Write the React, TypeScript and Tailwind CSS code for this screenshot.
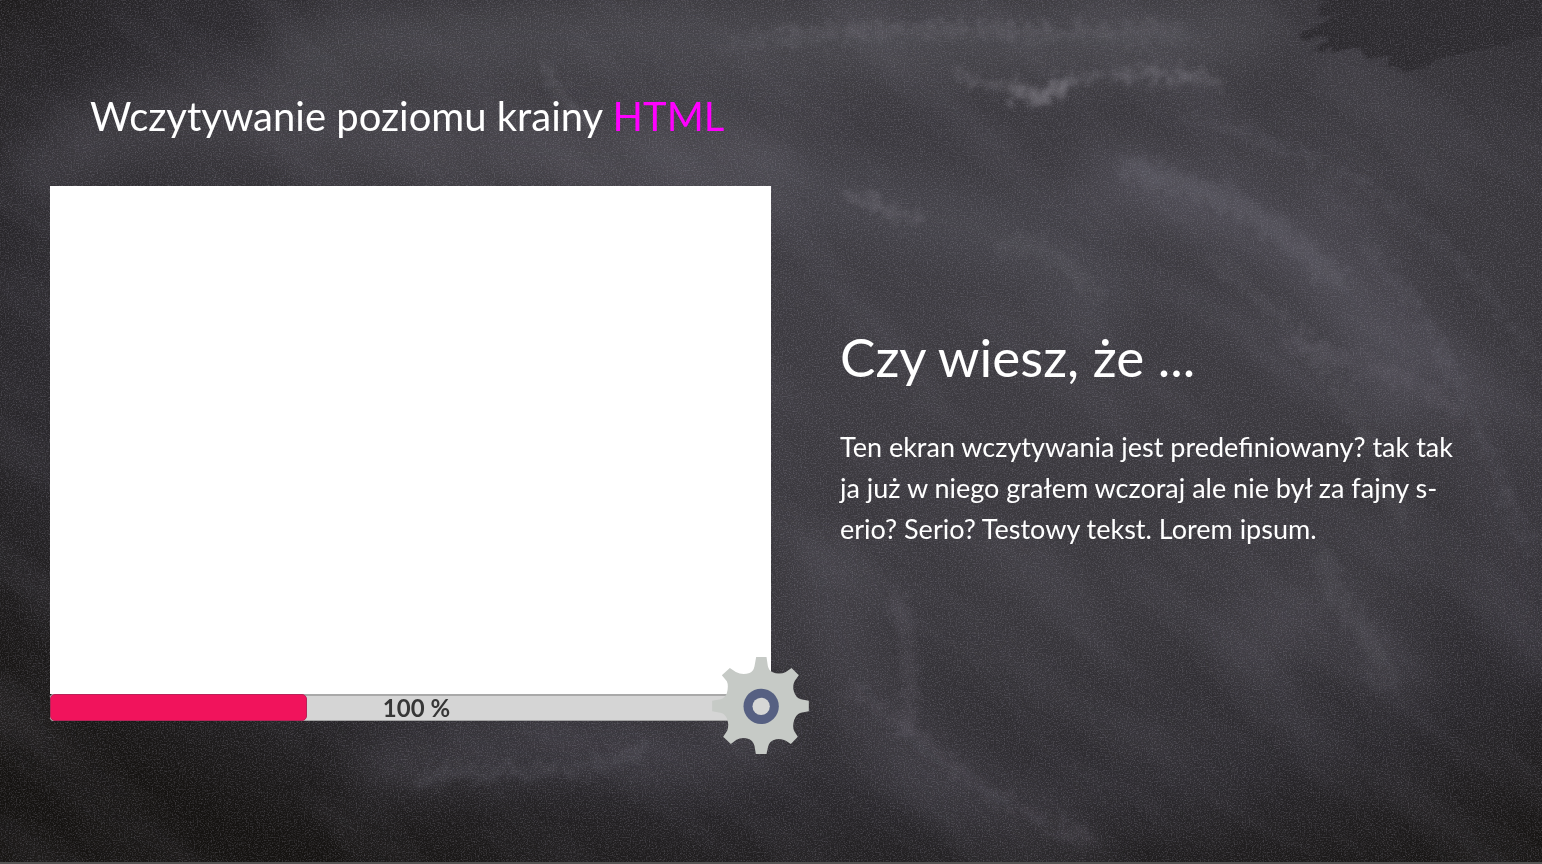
import React from "react";

const LOADED_SHARE = 35.6;

type Smear = { d: string; width: number; color: string; opacity: number };

const softSmears: Smear[] = [
  { d: "M300 55 C600 10 850 70 1250 30", width: 60, color: "#65636b", opacity: 0.35 },
  { d: "M1110 185 C1250 190 1340 260 1400 400", width: 60, color: "#66646f", opacity: 0.42 },
  { d: "M1330 200 C1440 330 1500 460 1530 640", width: 50, color: "#5a5862", opacity: 0.25 },
  { d: "M790 180 C900 230 1000 200 1100 300", width: 60, color: "#5d5b64", opacity: 0.35 },
  { d: "M820 560 C840 700 900 760 1080 840", width: 50, color: "#5d5b64", opacity: 0.3 },
  { d: "M380 770 C480 730 620 760 760 740", width: 50, color: "#5b5963", opacity: 0.35 },
  { d: "M1260 640 C1320 560 1330 600 1400 680", width: 60, color: "#5d5b64", opacity: 0.3 },
  { d: "M60 160 C200 60 400 170 760 160", width: 70, color: "#5a585f", opacity: 0.4 },
];

const fineSmears: Smear[] = [
  { d: "M720 50 C850 10 1000 40 1180 28", width: 6, color: "#8c8a92", opacity: 0.28 },
  { d: "M780 45 C900 28 1050 45 1200 38", width: 4, color: "#8c8a92", opacity: 0.2 },
  { d: "M955 75 C1010 85 1035 105 1060 88 C1100 70 1160 72 1220 82", width: 8, color: "#9b99a1", opacity: 0.32 },
  { d: "M1020 92 C1035 104 1045 104 1062 84", width: 12, color: "#9b99a1", opacity: 0.35 },
  { d: "M850 195 C880 195 885 225 915 218", width: 10, color: "#96949d", opacity: 0.26 },
  { d: "M1130 170 C1230 190 1280 230 1335 280", width: 24, color: "#85838e", opacity: 0.16 },
  { d: "M1290 340 C1350 370 1420 370 1455 415", width: 14, color: "#85838e", opacity: 0.14 },
  { d: "M1360 240 C1450 330 1490 460 1530 550", width: 8, color: "#85838e", opacity: 0.16 },
  { d: "M1180 120 C1350 150 1450 230 1535 360", width: 8, color: "#77757f", opacity: 0.18 },
  { d: "M1210 260 C1300 320 1360 400 1400 520", width: 12, color: "#77757f", opacity: 0.14 },
  { d: "M1000 250 C1030 230 1060 260 1100 300", width: 14, color: "#85838e", opacity: 0.12 },
  { d: "M545 70 C560 90 562 110 590 120", width: 12, color: "#85838e", opacity: 0.22 },
  { d: "M900 600 C900 640 920 680 905 730", width: 14, color: "#85838e", opacity: 0.14 },
  { d: "M1325 560 C1330 620 1370 610 1385 680", width: 22, color: "#85838e", opacity: 0.12 },
  { d: "M850 690 C930 740 970 800 1090 840", width: 12, color: "#85838e", opacity: 0.14 },
  { d: "M420 780 C500 760 560 790 640 750", width: 12, color: "#85838e", opacity: 0.16 },
];

function Chalkboard() {
  return (
    <svg
      className="pointer-events-none absolute inset-0 h-full w-full"
      viewBox="0 0 1542 864"
      preserveAspectRatio="xMidYMid slice"
      colorInterpolationFilters="sRGB"
      aria-hidden="true"
    >
      <defs>
        <radialGradient id="board" cx="0.6" cy="0.34" r="0.76">
          <stop offset="0" stopColor="#3e3c42" />
          <stop offset="0.5" stopColor="#39373c" />
          <stop offset="0.78" stopColor="#2a282c" />
          <stop offset="1" stopColor="#151311" />
        </radialGradient>
        <filter id="soft" x="-20%" y="-50%" width="140%" height="200%">
          <feGaussianBlur stdDeviation="24" />
        </filter>
        <filter id="rough" x="-20%" y="-50%" width="140%" height="200%">
          <feTurbulence type="fractalNoise" baseFrequency="0.12" numOctaves="4" seed="4" result="n" />
          <feDisplacementMap in="SourceGraphic" in2="n" scale="44" xChannelSelector="R" yChannelSelector="G" />
          <feGaussianBlur stdDeviation="2.5" />
        </filter>
        <filter id="wiped" x="-10%" y="-10%" width="120%" height="120%">
          <feTurbulence type="fractalNoise" baseFrequency="0.03 0.1" numOctaves="3" seed="8" result="n" />
          <feDisplacementMap in="SourceGraphic" in2="n" scale="14" xChannelSelector="R" yChannelSelector="G" />
          <feGaussianBlur stdDeviation="1" />
        </filter>
        <filter id="dust" x="0" y="0" width="100%" height="100%">
          <feTurbulence type="fractalNoise" baseFrequency="0.73" numOctaves="4" seed="11" />
          <feColorMatrix values="0 0 0 0 0.62  0 0 0 0 0.61  0 0 0 0 0.66  2.4 0 0 0 -1.05" />
          <feGaussianBlur stdDeviation="0.6" />
        </filter>
        <filter id="clouds" x="0" y="0" width="100%" height="100%">
          <feTurbulence type="fractalNoise" baseFrequency="0.004 0.014" numOctaves="6" seed="21" />
          <feColorMatrix values="0 0 0 0 0.5  0 0 0 0 0.49  0 0 0 0 0.55  2 0 0 0 -0.85" />
        </filter>
      </defs>
      <rect width="1542" height="864" fill="url(#board)" />
      <g filter="url(#soft)" fill="none" strokeLinecap="round">
        {softSmears.map((s) => (
          <path key={s.d} d={s.d} stroke={s.color} strokeWidth={s.width} opacity={s.opacity} />
        ))}
      </g>
      <rect x="-300" y="-700" width="2200" height="2200" transform="rotate(38 1100 400)" filter="url(#clouds)" opacity="0.16" />
      <g filter="url(#rough)" fill="none" strokeLinecap="round">
        {fineSmears.map((s) => (
          <path key={s.d} d={s.d} stroke={s.color} strokeWidth={s.width} opacity={s.opacity} />
        ))}
      </g>
      <path
        d="M1345 -10 L1312 16 L1338 14 L1300 40 L1330 38 L1318 50 L1358 50 L1368 60 L1392 56 L1386 70 L1420 68 L1460 54 L1550 34 V-10 Z"
        fill="#2c2a2e"
        filter="url(#wiped)"
      />
      <rect width="1542" height="864" filter="url(#dust)" opacity="0.3" />
    </svg>
  );
}

function Gear() {
  return (
    <svg className="absolute -right-[38px] -top-[37px] h-[97px] w-[97px]" viewBox="97 51 290 291" aria-hidden="true">
      <path
        fill="#c6cac6"
        d="M229 51 H260 L264 78 Q267 91 277 96 Q298 105 318 96 L335 84 L357 106 L345 122 Q337 137 342 154 Q348 174 363 178 L387 182 V214 L363 218 Q349 222 343 240 Q337 260 343 273 L354 290 L333 312 L318 302 Q299 292 280 301 Q269 306 265 319 L260 342 H228 L224 318 Q221 305 209 298 Q188 289 170 299 L153 312 L130 290 L142 272 Q149 252 141 235 Q136 222 122 218 L97 214 V182 L122 178 Q136 174 141 160 Q147 137 141 124 L126 106 L150 84 L168 96 Q188 107 209 99 Q221 94 224 79 Z"
      />
      <circle cx="244" cy="199" r="53" fill="#566082" />
      <circle cx="244" cy="199" r="26" fill="#d6d7d6" />
    </svg>
  );
}

export default function App() {
  return (
    <div className="relative isolate min-h-screen overflow-hidden border-b-2 border-[#555453] bg-[#343236] font-['Lato',sans-serif] text-white">
      <Chalkboard />
      <main className="relative grid grid-cols-[minmax(0,721fr)_minmax(0,615fr)] gap-x-[69px] pb-[141px] pl-[50px] pr-[87px] pt-[84px]">
        <section>
          <h1 className="mb-[38px] whitespace-nowrap pl-10 text-[40px] leading-[64px]">
            Wczytywanie poziomu krainy <span className="text-[#ff00ff]">HTML</span>
          </h1>
          <div className="h-[508px] bg-white" />
          <div className="relative">
            <div
              role="progressbar"
              aria-label="Wczytywanie"
              aria-valuenow={100}
              className="relative h-[27px] rounded-[4px] bg-[#d5d5d5] shadow-[inset_0_2px_0_#a9a9a9,inset_0_-1px_0_#a3a3a3]"
            >
              <div
                className="h-full rounded-[5px] border border-[#b82358] bg-[#f1135c]"
                style={{ width: `${LOADED_SHARE}%` }}
              />
              <span className="absolute inset-0 flex items-center justify-center pl-3 text-[24px] font-bold leading-none text-[#363636]">
                100 %
              </span>
            </div>
            <Gear />
          </div>
        </section>
        <section className="pt-[241px]">
          <h2 className="mb-[37px] whitespace-nowrap text-[53px] leading-[64px]">Czy wiesz, że ...</h2>
          <p className="whitespace-nowrap text-[27px] leading-[41px]">
            Ten ekran wczytywania jest predefiniowany? tak tak
            <br />
            ja już w niego grałem wczoraj ale nie był za fajny s-
            <br />
            erio? Serio? Testowy tekst. Lorem ipsum.
          </p>
        </section>
      </main>
    </div>
  );
}
